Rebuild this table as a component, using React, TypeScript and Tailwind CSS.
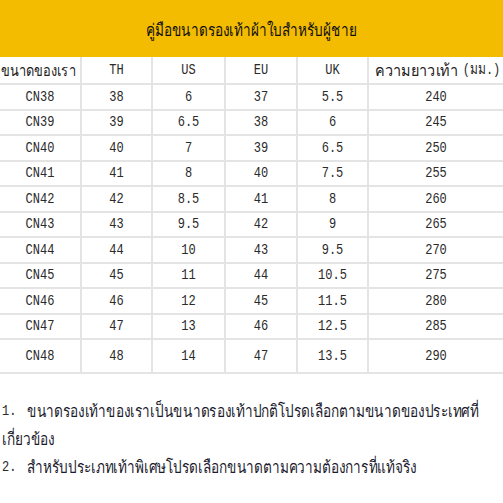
import React from "react";

const rows: [string, string, string, string, string, string][] = [
  ["CN38", "38", "6", "37", "5.5", "240"],
  ["CN39", "39", "6.5", "38", "6", "245"],
  ["CN40", "40", "7", "39", "6.5", "250"],
  ["CN41", "41", "8", "40", "7.5", "255"],
  ["CN42", "42", "8.5", "41", "8", "260"],
  ["CN43", "43", "9.5", "42", "9", "265"],
  ["CN44", "44", "10", "43", "9.5", "270"],
  ["CN45", "45", "11", "44", "10.5", "275"],
  ["CN46", "46", "12", "45", "11.5", "280"],
  ["CN47", "47", "13", "46", "12.5", "285"],
  ["CN48", "48", "14", "47", "13.5", "290"],
];

const thai = "font-['Noto_Sans','DejaVu_Sans',sans-serif]";
const mono = "font-['Liberation_Mono',monospace]";

function Cell({ children, last }: { children: React.ReactNode; last?: boolean }) {
  return (
    <div
      className={`flex items-center justify-center whitespace-nowrap border-b-2 border-[#e4e4e4] ${last ? "" : "border-r-2"}`}
    >
      {children}
    </div>
  );
}

function Num({ children, className = "" }: { children: React.ReactNode; className?: string }) {
  return (
    <span className={`inline-block shrink-0 ${mono} text-[12px] scale-y-125 text-[#2a2a2a] ${className}`}>
      {children}
    </span>
  );
}

// size carries the font size + horizontal squeeze, since the reference Thai face is condensed
function Thai({
  children,
  size = "text-[16px] scale-x-[0.8]",
  className = "",
}: {
  children: React.ReactNode;
  size?: string;
  className?: string;
}) {
  return (
    <span className={`inline-block shrink-0 whitespace-nowrap ${thai} ${size} ${className}`}>
      {children}
    </span>
  );
}

export default function App() {
  return (
    <div className="w-[503px] h-[503px] bg-white text-[#222] overflow-hidden">
      {/* Title bar */}
      <div className="h-[57px] bg-[#f3bc00] flex items-center justify-center text-[#111]">
        <Thai size="text-[17px] scale-x-[0.8]" className="pt-[2px]">
          คู่มือขนาดรองเท้าผ้าใบสำหรับผู้ชาย
        </Thai>
      </div>

      {/* Size table */}
      <div className="grid grid-cols-[82px_71px_73px_72px_71px_1fr]">
        <div className="contents [&>div]:h-[28px]">
          <Cell>
            <Thai className="-ml-[4px]">ขนาดของเรา</Thai>
          </Cell>
          <Cell><Num>TH</Num></Cell>
          <Cell><Num>US</Num></Cell>
          <Cell><Num>EU</Num></Cell>
          <Cell><Num>UK</Num></Cell>
          <Cell last>
            <Thai size="text-[16px] scale-x-[0.9]" className="origin-right -ml-[6px]">
              ความยาวเท้า
            </Thai>
            <Num className="ml-[5px]">(มม.)</Num>
          </Cell>
        </div>
        {rows.map((r, i) => (
          <div
            key={r[0]}
            className={`contents ${i === rows.length - 1 ? "[&>div]:h-[34px]" : "[&>div]:h-[25.5px]"}`}
          >
            {r.map((v, j) => (
              <Cell key={j} last={j === 5}>
                <Num>{v}</Num>
              </Cell>
            ))}
          </div>
        ))}
      </div>

      {/* Notes */}
      <div className="mt-[23px] pl-[2px] leading-[28px] text-[#1c1c2e]">
        <div className="flex items-center">
          <Num>1.</Num>
          <span className="inline-block shrink-0 w-[11px]" />
          <Thai size="text-[17px] scale-x-[0.8]" className="origin-left">
            ขนาดรองเท้าของเราเป็นขนาดรองเท้าปกติโปรดเลือกตามขนาดของประเทศที่
          </Thai>
        </div>
        <div>
          <Thai size="text-[17px] scale-x-[0.8]" className="origin-left">
            เกี่ยวข้อง
          </Thai>
        </div>
        <div className="flex items-center">
          <Num>2.</Num>
          <span className="inline-block shrink-0 w-[11px]" />
          <Thai size="text-[17px] scale-x-[0.8]" className="origin-left">
            สำหรับประเภทเท้าพิเศษโปรดเลือกขนาดตามความต้องการที่แท้จริง
          </Thai>
        </div>
      </div>
    </div>
  );
}
